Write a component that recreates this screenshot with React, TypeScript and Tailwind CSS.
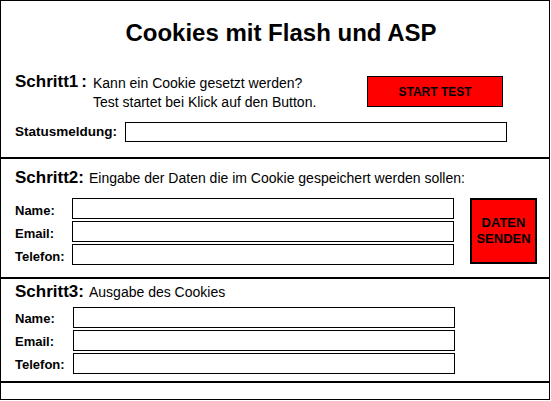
export default function App() {
  const fields = ["Name:", "Email:", "Telefon:"];

  return (
    <div className="bg-white w-[551px] h-[401px] font-['Liberation_Sans',Arial,sans-serif] text-black">
      <div className="w-[550px] h-[400px] border border-black flex flex-col">
        {/* Schritt 1 */}
        <section className="h-[158px] shrink-0 border-b-2 border-black">
          <h1 className="pt-[18px] pl-3 text-center text-[24px] leading-[28px] font-bold">
            Cookies mit Flash und ASP
          </h1>
          <div className="mt-[27px] flex items-start pl-[14px]">
            <span className="text-[17px] leading-[19px] font-bold -mt-[2px]">
              Schritt1<span className="ml-[3px]">:</span>
            </span>
            <div className="ml-[6px] text-[14px] leading-[19px]">
              <p>Kann ein Cookie gesetzt werden?</p>
              <p>Test startet bei Klick auf den Button.</p>
            </div>
            <button className="ml-auto mr-[46px] mt-[2px] w-[136px] h-[31px] bg-[#ff0000] border border-black text-[12px] font-bold">
              START TEST
            </button>
          </div>
          <div className="mt-[10px] flex items-center pl-[14px]">
            <span className="w-[110px] text-[13.5px] font-bold">Statusmeldung:</span>
            <div className="w-[382px] h-[20px] border border-black" />
          </div>
        </section>

        {/* Schritt 2 */}
        <section className="h-[120px] shrink-0 border-b-2 border-black pl-[14px] pt-[9px]">
          <div className="flex items-baseline text-[14px] leading-[19px]">
            <span className="text-[17px] font-bold">Schritt2:</span>
            <span className="ml-[5px]">Eingabe der Daten die im Cookie gespeichert werden sollen:</span>
          </div>
          <div className="mt-[10px] flex items-start">
            <div className="flex flex-col gap-[2px]">
              {fields.map((f) => (
                <div key={f} className="flex h-[21px]">
                  <span className="w-[57px] pt-[4px] text-[13px] leading-[17px] font-bold">{f}</span>
                  <div className="w-[382px] h-[21px] border border-black" />
                </div>
              ))}
            </div>
            <button className="ml-4 w-[67px] h-[66px] bg-[#ff0000] border-2 border-black text-[13px] leading-[16px] font-bold">
              DATEN
              <br />
              SENDEN
            </button>
          </div>
        </section>

        {/* Schritt 3 */}
        <section className="h-[104px] shrink-0 border-b-2 border-black pl-[14px] pt-[3px]">
          <div className="flex items-baseline text-[14px] leading-[19px]">
            <span className="text-[17px] font-bold">Schritt3:</span>
            <span className="ml-[5px]">Ausgabe des Cookies</span>
          </div>
          <div className="mt-[5px] flex flex-col gap-[2px]">
            {fields.map((f) => (
              <div key={f} className="flex h-[21px]">
                <span className="w-[58px] pt-[3px] text-[13px] leading-[17px] font-bold">{f}</span>
                <div className="w-[382px] h-[21px] border border-black" />
              </div>
            ))}
          </div>
        </section>

        <div className="flex-1" />
      </div>
    </div>
  );
}
